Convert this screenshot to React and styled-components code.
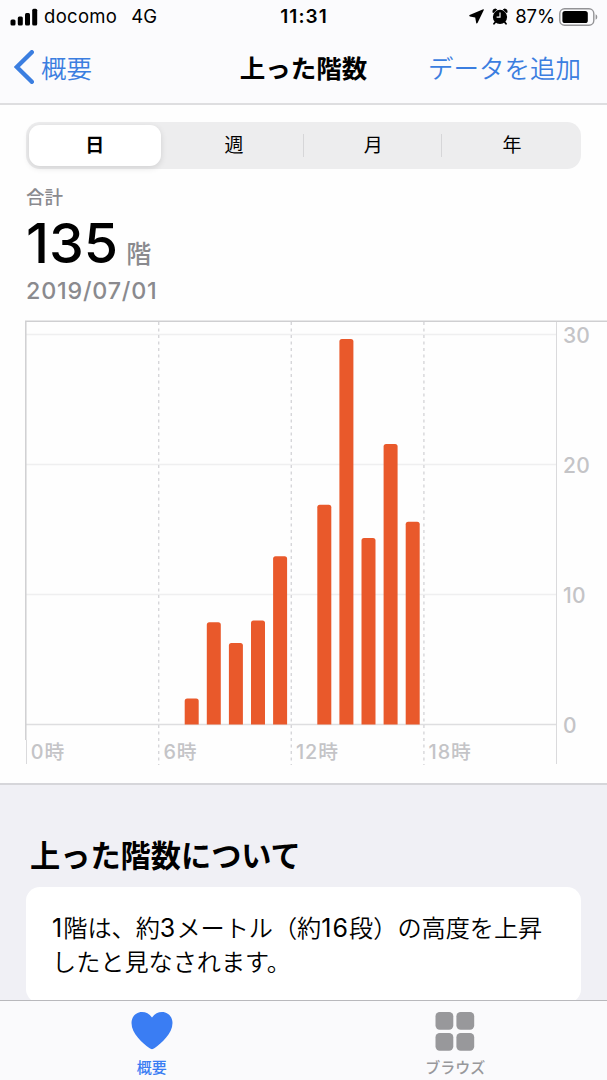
import React from 'react';
import styled, { createGlobalStyle } from 'styled-components';

const GlobalStyle = createGlobalStyle`
  * {
    box-sizing: border-box;
  }

  body {
    margin: 0;
    background: #fefefe;
    color: #000;
    font-family: Inter, "Noto Sans CJK JP", sans-serif;
  }
`;

const Screen = styled.div`
  display: flex;
  flex-direction: column;
  width: 607px;
  height: 1080px;
  overflow: hidden;
`;

const TopBar = styled.header`
  flex: none;
  height: 105px;
  background: #fbfbfd;
  border-bottom: 2px solid #dedee0;
`;

const StatusBar = styled.div`
  display: grid;
  grid-template-columns: 1fr auto 1fr;
  align-items: center;
  height: 33px;
  padding: 0 9px 0 10px;
  font-size: 18.5px;
  line-height: 33px;
`;

const StatusGroup = styled.div`
  display: flex;
  align-items: center;
  justify-content: ${p => (p.$end ? 'flex-end' : 'flex-start')};
`;

const Carrier = styled.span`
  margin-left: 6px;
  letter-spacing: 0.3px;
`;

const Network = styled.span`
  margin-left: 14px;
`;

const Clock = styled.span`
  font-weight: 600;
  font-size: 19px;
  letter-spacing: 1.1px;
`;

const Percent = styled.span`
  margin: 0 4px 0 7px;
  letter-spacing: -0.1px;
`;

const NavBar = styled.nav`
  display: grid;
  grid-template-columns: 1fr auto 1fr;
  align-items: center;
  height: 68px;
  padding: 0 26px 0 14px;
  font-family: "Noto Sans CJK JP", sans-serif;
`;

const NavLink = styled.a`
  display: flex;
  align-items: center;
  justify-self: ${p => (p.$end ? 'end' : 'start')};
  gap: 7px;
  color: #3b7ee0;
  font-size: 25.5px;
  font-weight: 350;
  line-height: 36px;
`;

const NavTitle = styled.h1`
  margin: 0 0 0 12px;
  font-size: 25.5px;
  font-weight: 700;
  line-height: 36px;
`;

const Summary = styled.section`
  flex: none;
  height: 215px;
  padding: 17px 26px 0;
`;

const Segments = styled.div`
  display: grid;
  grid-template-columns: repeat(4, 1fr);
  height: 47px;
  padding: 3px 0;
  border-radius: 14px;
  background: #ededee;
`;

const Segment = styled.div`
  display: flex;
  align-items: center;
  justify-content: center;
  margin: ${p => (p.$active ? '0 4px 0 3px' : '9px 0 9px -1px')};
  padding: ${p => (p.$active ? '0' : '0 0 0 1px')};
  border-radius: ${p => (p.$active ? '11px' : '0')};
  border-left: ${p => (p.$divider ? '1.5px solid #d6d6d8' : '0')};
  background: ${p => (p.$active ? '#fff' : 'transparent')};
  box-shadow: ${p => (p.$active ? '0 2px 6px rgba(0, 0, 0, 0.12)' : 'none')};
  font-size: 19px;
  font-weight: ${p => (p.$active ? 700 : 400)};
  line-height: 23px;
`;

const Label = styled.div`
  margin-top: 16px;
  color: #8a8a8e;
  font-size: 18.5px;
  font-weight: 500;
  line-height: 24px;
`;

const Total = styled.div`
  display: flex;
  align-items: baseline;
  gap: 8px;
  height: 68px;
  line-height: 68px;
`;

const TotalValue = styled.span`
  font-size: 55.5px;
  font-weight: 500;
`;

const TotalUnit = styled.span`
  color: #8a8a8e;
  font-size: 25px;
  font-weight: 500;
`;

const DateText = styled.div`
  color: #8a8a8e;
  font-size: 23.3px;
  font-weight: 550;
  letter-spacing: 0.8px;
  line-height: 28px;
`;

const ChartSvg = styled.svg`
  flex: none;
  display: block;
  width: 607px;
  height: 463px;
`;

const AxisText = styled.text`
  fill: #c4c4c7;
  font-size: ${p => (p.$hour ? '19.8px' : '21px')};
  font-weight: ${p => (p.$hour ? 500 : 450)};
  letter-spacing: ${p => (p.$hour ? '0.9px' : '0.2px')};
`;

const About = styled.section`
  flex: 1;
  min-height: 0;
  overflow: hidden;
  padding: 52px 26px 0;
  border-top: 2px solid #d6d6da;
  background: #f0f0f5;
`;

const AboutTitle = styled.h2`
  margin: 0 0 12px 4px;
  font-size: 30.2px;
  font-weight: 700;
  line-height: 38px;
`;

const Card = styled.div`
  height: 116px;
  padding: 24px 26px;
  border-radius: 14px;
  background: #fff;
  font-size: 24.15px;
  font-weight: 350;
  line-height: 34px;
`;

const CardLine = styled.div`
  white-space: nowrap;
`;

const Num = styled.span`
  font-size: 25px;
  font-weight: 380;
  letter-spacing: 1.1px;
`;

const TabBar = styled.footer`
  flex: none;
  display: grid;
  grid-template-columns: 1fr 1fr;
  height: 80px;
  border-top: 1px solid #b8b8bc;
  background: #fafafc;
`;

const Tab = styled.div`
  display: flex;
  flex-direction: column;
  align-items: center;
  gap: 7px;
  padding-top: 10px;
  color: ${p => (p.$active ? '#3a7df3' : '#98989b')};
  font-size: 15px;
  font-weight: 500;
  line-height: 20px;
`;

const segments = ['日', '週', '月', '年'];

// floors climbed, by starting hour
const floors = [
  { hour: 7, value: 2 },
  { hour: 8, value: 7.87 },
  { hour: 9, value: 6.26 },
  { hour: 10, value: 8 },
  { hour: 11, value: 12.95 },
  { hour: 13, value: 16.9 },
  { hour: 14, value: 29.65 },
  { hour: 15, value: 14.35 },
  { hour: 16, value: 21.58 },
  { hour: 17, value: 15.6 }
];

const BASE = 404.5;
const LEFT = 26.5;
const HOUR = 22.1;
const FLOOR = 13;

const barPath = ({ hour, value }) => {
  const x = LEFT + hour * HOUR + 3.5;
  const y = BASE - value * FLOOR;
  return `M${x} ${BASE}V${y + 2.5}q0 -2.5 2.5 -2.5h9q2.5 0 2.5 2.5V${BASE}z`;
};

const Signal = () => (
  <svg width="28" height="18" viewBox="0 0 28 18">
    <rect x="0.5" y="11.5" width="5" height="6" rx="1.5" />
    <rect x="7.8" y="8.5" width="5" height="9" rx="1.5" />
    <rect x="15" y="5" width="5" height="12.5" rx="1.5" />
    <rect x="22.2" y="0.7" width="5" height="16.8" rx="1.5" />
  </svg>
);

const LocationArrow = () => (
  <svg width="15" height="15" viewBox="0 0 15 15">
    <path d="M14.2 0.3L0.6 6.1Q-0.2 6.9 0.9 7.4L6.2 8.6L7.2 14Q7.7 15 8.5 14.1L14.8 1Q15 0 14.2 0.3z" />
  </svg>
);

const AlarmSvg = styled.svg`
  margin-left: 8px;
`;

const Alarm = () => (
  <AlarmSvg width="16" height="17" viewBox="0 0 16 17">
    <circle cx="8" cy="8.9" r="7.1" />
    <path d="M0.5 4.6Q0 1.2 3.4 0.5L5.2 1.4L1.6 5zM15.5 4.6Q16 1.2 12.6 0.5L10.8 1.4L14.4 5z" />
    <path d="M3.6 13.7L2 15.8M12.4 13.7L14 15.8" stroke="#000" strokeWidth="1.8" strokeLinecap="round" />
    <path d="M8 4.6V9.2H4.6" fill="none" stroke="#fbfbfd" strokeWidth="1.2" />
  </AlarmSvg>
);

const Battery = () => (
  <svg width="39" height="18" viewBox="0 0 39 18">
    <rect x="0.8" y="0.8" width="34" height="16.4" rx="4.8" fill="none" stroke="#939396" strokeWidth="1.4" />
    <rect x="3.4" y="3" width="25.4" height="12" rx="2.6" />
    <path d="M36.6 6.3Q38.3 7 38.3 9T36.6 11.7z" fill="#939396" />
  </svg>
);

const BackChevron = () => (
  <svg width="20" height="34" viewBox="0 0 20 34">
    <path d="M17.8 2.2L2.8 17L17.8 31.8" fill="none" stroke="#3b7ee0" strokeWidth="4.4" strokeLinecap="round" />
  </svg>
);

const Heart = () => (
  <svg width="42" height="40" viewBox="0 0 42 40">
    <path fill="currentColor" d="M21 6.6C18.2 2.8 14.9 1 11 1C5 1 0.5 5.6 0.5 12C0.5 22.5 11.5 32 18.3 37.1Q21 39.2 23.7 37.1C30.5 32 41.5 22.5 41.5 12C41.5 5.6 37 1 31 1C27.1 1 23.8 2.8 21 6.6z" />
  </svg>
);

const Squares = () => (
  <svg width="40" height="40" viewBox="0 0 40 40" fill="currentColor">
    <rect x="0.5" y="1" width="17.8" height="17.8" rx="4.2" />
    <rect x="21.4" y="1" width="17.8" height="17.8" rx="4.2" />
    <rect x="0.5" y="22" width="17.8" height="17.8" rx="4.2" />
    <rect x="21.4" y="22" width="17.8" height="17.8" rx="4.2" />
  </svg>
);

const FloorsChart = () => (
  <ChartSvg viewBox="0 0 607 463">
    {[0, 10, 20, 30].map(v => (
      <g key={v}>
        <line x1="26" x2="556" y1={BASE - v * FLOOR} y2={BASE - v * FLOOR} stroke={v ? '#efeff0' : '#dedee0'} strokeWidth="1.4" />
        <AxisText x="563" y={BASE - v * FLOOR + 8.5}>{v}</AxisText>
      </g>
    ))}
    {[0, 6, 12, 18].map(h => (
      <g key={h}>
        {h > 0 && (
          <line x1={LEFT + h * HOUR - 0.4} x2={LEFT + h * HOUR - 0.4} y1="2" y2="445" stroke="#d6d6d9" strokeWidth="1.4" strokeDasharray="3 3.5" />
        )}
        <AxisText $hour x={LEFT + h * HOUR + 4.3} y="439">{`${h}時`}</AxisText>
      </g>
    ))}
    <path d="M25.8 420V1.2H607" fill="none" stroke="#cfcfd1" strokeWidth="1.5" />
    <path d="M26.5 420V444M556.5 2V444" stroke="#dadadc" />
    {floors.map(f => (
      <path key={f.hour} d={barPath(f)} fill="#e9592b" />
    ))}
  </ChartSvg>
);

export default function App() {
  return (
    <Screen>
      <GlobalStyle />
      <TopBar>
        <StatusBar>
          <StatusGroup>
            <Signal />
            <Carrier>docomo</Carrier>
            <Network>4G</Network>
          </StatusGroup>
          <Clock>11:31</Clock>
          <StatusGroup $end>
            <LocationArrow />
            <Alarm />
            <Percent>87%</Percent>
            <Battery />
          </StatusGroup>
        </StatusBar>
        <NavBar>
          <NavLink>
            <BackChevron />
            概要
          </NavLink>
          <NavTitle>上った階数</NavTitle>
          <NavLink $end>データを追加</NavLink>
        </NavBar>
      </TopBar>
      <Summary>
        <Segments>
          {segments.map((name, i) => (
            <Segment key={name} $active={i === 0} $divider={i > 1}>
              {name}
            </Segment>
          ))}
        </Segments>
        <Label>合計</Label>
        <Total>
          <TotalValue>135</TotalValue>
          <TotalUnit>階</TotalUnit>
        </Total>
        <DateText>2019/07/01</DateText>
      </Summary>
      <FloorsChart />
      <About>
        <AboutTitle>上った階数について</AboutTitle>
        <Card>
          <CardLine>
            <Num>1</Num>階は、約<Num>3</Num>メートル（約<Num>16</Num>段）の高度を上昇
          </CardLine>
          <CardLine>したと見なされます。</CardLine>
        </Card>
      </About>
      <TabBar>
        <Tab $active>
          <Heart />
          概要
        </Tab>
        <Tab>
          <Squares />
          ブラウズ
        </Tab>
      </TabBar>
    </Screen>
  );
}
